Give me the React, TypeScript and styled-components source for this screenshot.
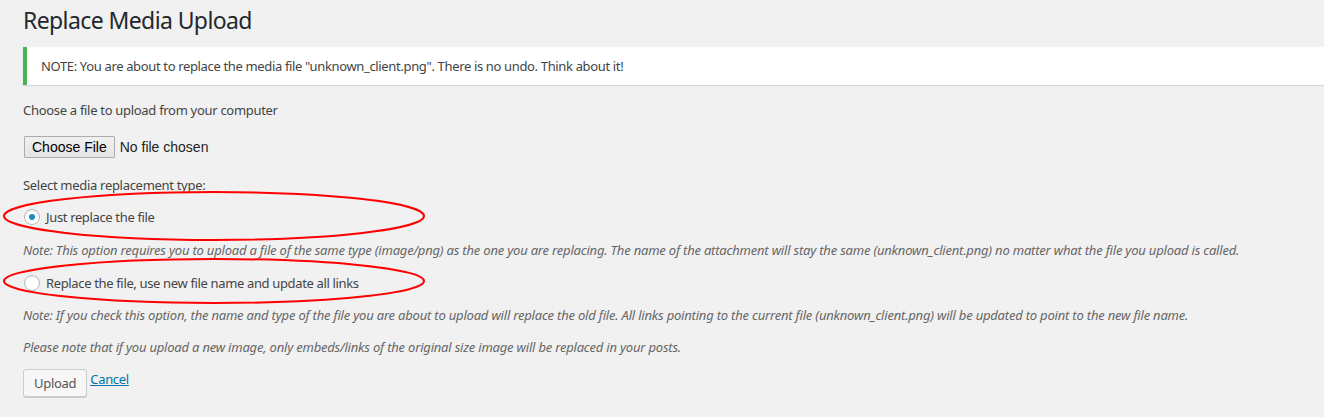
import React from "react";
import styled, { createGlobalStyle } from "styled-components";

const GlobalStyle = createGlobalStyle`
  html, body {
    margin: 0;
    padding: 0;
    background: #f1f1f1;
  }
  body {
    font-family: "Noto Sans", "Open Sans", sans-serif;
    font-size: 13px;
    color: #444;
  }
`;

const Page = styled.div`
  position: relative;
  width: 1324px;
  height: 417px;
  overflow: hidden;
  padding-left: 23px;
  box-sizing: border-box;
`;

const Title = styled.h1`
  margin: 5px 0 12px;
  font-size: 23px;
  line-height: 30px;
  font-weight: 400;
  color: #23282d;
  letter-spacing: -0.6px;
`;

const Notice = styled.div`
  background: #fff;
  border-left: 4px solid #46b450;
  box-shadow: 0 1px 1px 0 rgba(0, 0, 0, 0.1);
  padding: 9px 14px;
  line-height: 20px;
  letter-spacing: -0.35px;
  margin-right: -1px;
`;

const Text = styled.p<{ $top: number; $italic?: boolean }>`
  margin: ${(p) => p.$top}px 0 0;
  line-height: 20px;
  letter-spacing: ${(p) => (p.$italic ? "-0.2px" : "-0.3px")};
  font-style: ${(p) => (p.$italic ? "italic" : "normal")};
  color: ${(p) => (p.$italic ? "#666" : "#444")};
`;

const FileRow = styled.div`
  display: flex;
  align-items: center;
  gap: 5px;
  margin-top: 16px;
  height: 22px;
  font-family: "Liberation Sans", Arial, sans-serif;
  font-size: 14px;
  color: #222;
`;

const FileButton = styled.button`
  height: 22px;
  margin: 0 0 0 1px;
  padding: 0 7px;
  font: inherit;
  color: #000;
  border: 1px solid #adadad;
  border-radius: 1px;
  background: linear-gradient(#f0f0f0, #e5e5e5);
`;

const RadioRow = styled.label<{ $top: number }>`
  display: flex;
  align-items: center;
  gap: 6px;
  margin-top: ${(p) => p.$top}px;
  height: 20px;
  line-height: 20px;
  letter-spacing: -0.35px;
  color: #444;
`;

const Radio = styled.span<{ $checked?: boolean }>`
  position: relative;
  width: 14px;
  height: 14px;
  margin-left: 1px;
  border: 1px solid #b4b9be;
  border-radius: 50%;
  background: #fff;
  box-shadow: inset 0 1px 2px rgba(0, 0, 0, 0.07);
  &::after {
    content: "";
    display: ${(p) => (p.$checked ? "block" : "none")};
    position: absolute;
    left: 4px;
    top: 4px;
    width: 6px;
    height: 6px;
    border-radius: 50%;
    background: #1e8cbe;
  }
`;

const Actions = styled.div`
  display: flex;
  align-items: flex-start;
  gap: 3px;
  margin-top: 12px;
`;

const UploadButton = styled.button`
  height: 28px;
  padding: 0 10px;
  font: inherit;
  font-size: 13px;
  letter-spacing: -0.3px;
  color: #555;
  background: #f7f7f7;
  border: 1px solid #ccc;
  border-radius: 3px;
  box-shadow: 0 1px 0 #ccc;
`;

const CancelLink = styled.a`
  line-height: 20px;
  color: #0073aa;
  text-decoration: underline;
  letter-spacing: -0.3px;
`;

const Marks = styled.svg`
  position: absolute;
  left: 0;
  top: 0;
  pointer-events: none;
`;

export default function App() {
  return (
    <Page>
      <GlobalStyle />
      <Title>Replace Media Upload</Title>
      <Notice>
        NOTE: You are about to replace the media file "unknown_client.png". There is no undo. Think about it!
      </Notice>
      <Text $top={15}>Choose a file to upload from your computer</Text>
      <FileRow>
        <FileButton>Choose File</FileButton>
        <span>No file chosen</span>
      </FileRow>
      <Text $top={17}>Select media replacement type:</Text>
      <RadioRow $top={12}>
        <Radio $checked />
        Just replace the file
      </RadioRow>
      <Text $top={13} $italic>
        Note: This option requires you to upload a file of the same type (image/png) as the one you are replacing. The name of the attachment will stay the same (unknown_client.png) no matter what the file you upload is called.
      </Text>
      <RadioRow $top={13}>
        <Radio />
        Replace the file, use new file name and update all links
      </RadioRow>
      <Text $top={12} $italic>
        Note: If you check this option, the name and type of the file you are about to upload will replace the old file. All links pointing to the current file (unknown_client.png) will be updated to point to the new file name.
      </Text>
      <Text $top={12} $italic>
        Please note that if you upload a new image, only embeds/links of the original size image will be replaced in your posts.
      </Text>
      <Actions>
        <UploadButton>Upload</UploadButton>
        <CancelLink href="#">Cancel</CancelLink>
      </Actions>
      <Marks width="1324" height="417" viewBox="0 0 1324 417">
        <ellipse cx="214" cy="216" rx="210" ry="24" fill="none" stroke="#f00" strokeWidth="2" />
        <ellipse cx="214" cy="281" rx="210" ry="22" fill="none" stroke="#f00" strokeWidth="2" />
      </Marks>
    </Page>
  );
}
